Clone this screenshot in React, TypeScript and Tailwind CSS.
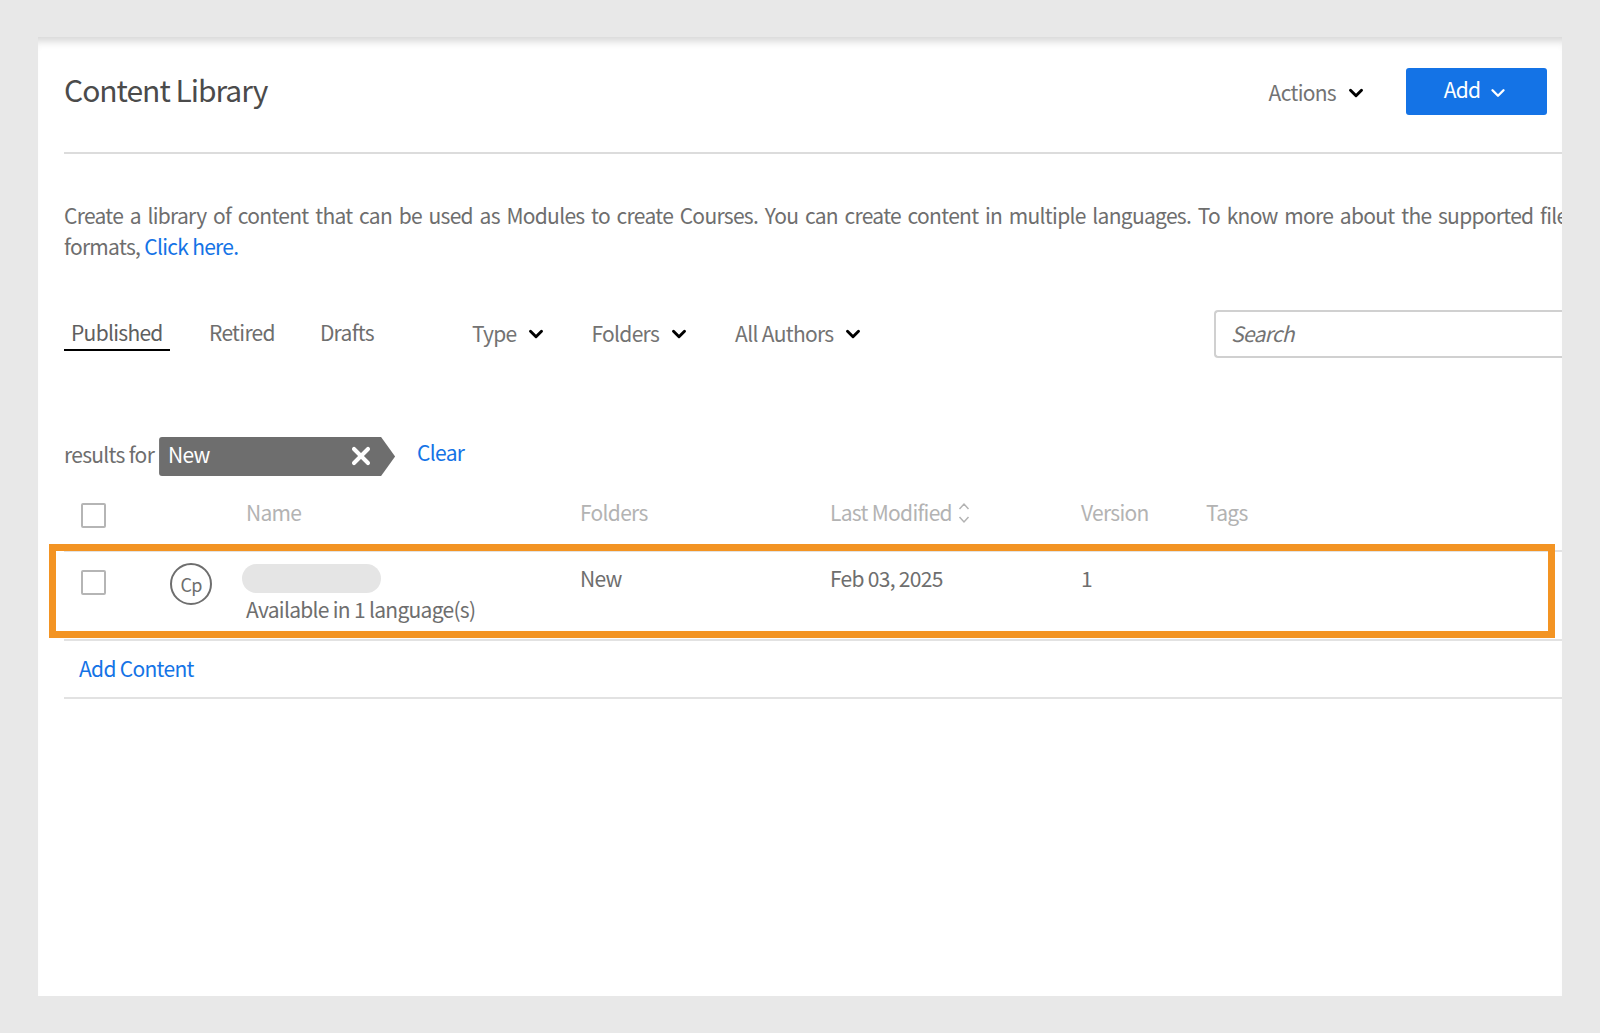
import React from 'react';
import { ChevronDown, X } from 'lucide-react';

const font = { fontFamily: '"Noto Sans CJK SC", "Open Sans", sans-serif' };

function Caret({ className = 'text-black' }: { className?: string }) {
  return <ChevronDown size={22} strokeWidth={3.2} className={className} />;
}

function Filter({ label, className }: { label: string; className: string }) {
  return (
    <button className={`flex items-center gap-[9px] text-[21px] tracking-[-0.7px] text-[#737373] ${className}`}>
      {label}
      <Caret />
    </button>
  );
}

function Checkbox() {
  return <span className="block w-[25px] h-[25px] rounded-[2px] border-2 border-[#b5b5b5] bg-white" />;
}

export default function App() {
  return (
    <div style={font} className="h-[1033px] bg-[#e8e8e8] pt-[37px] px-[38px] overflow-hidden">
      <div className="relative h-[959px] bg-white pl-[26px] overflow-hidden shadow-[inset_0_10px_8px_-6px_#d4d4d4]">
        {/* Header */}
        <div className="flex items-start justify-between h-[117px] border-b-2 border-[#dcdcdc] pr-[15px]">
          <h1 className="mt-[32px] text-[30px] leading-[40px] tracking-[-1px] text-[#4b4b4b]">Content Library</h1>
          <div className="flex items-center mt-[31px]">
            <button className="flex items-center gap-[9px] mt-[2px] text-[21px] tracking-[-0.7px] text-[#737373]">
              Actions
              <Caret />
            </button>
            <button className="flex items-center justify-center gap-[7px] ml-[39px] w-[141px] h-[47px] rounded-[3px] bg-[#1473e6] text-[21px] tracking-[-0.7px] text-white">
              <span className="-mt-[3px]">Add</span>
              <ChevronDown size={22} strokeWidth={2.6} className="mt-[3px]" />
            </button>
          </div>
        </div>

        {/* Intro */}
        <div className="mt-[46px] whitespace-nowrap text-[21px] leading-[31px] tracking-[-0.7px] text-[#6e6e6e]">
          <p className="[word-spacing:2.6px]">Create a library of content that can be used as Modules to create Courses. You can create content in multiple languages. To know more about the supported file</p>
          <p>formats, <a className="text-[#1473e6]">Click here.</a></p>
        </div>

        {/* Tabs and filters */}
        <div className="flex items-start mt-[48px] h-[47px] text-[21px] tracking-[-0.7px]">
          <div className="mt-[4px] w-[106px] h-[37px] border-b-2 border-black pl-[7px] leading-[36px] text-[#5f5f5f]">Published</div>
          <div className="mt-[4px] ml-[39px] leading-[36px] text-[#6e6e6e]">Retired</div>
          <div className="mt-[4px] ml-[45px] leading-[36px] text-[#6e6e6e]">Drafts</div>
          <div className="flex items-center mt-[6px] h-[36px]">
            <Filter label="Type" className="ml-[98px]" />
            <Filter label="Folders" className="ml-[44px]" />
            <Filter label="All Authors" className="ml-[45px]" />
          </div>
          <div className="ml-auto w-[348px] h-[48px] rounded-l-[4px] border-2 border-r-0 border-[#d0d0d0] pl-[15px] italic leading-[42px] text-[#737373]">Search</div>
        </div>

        {/* Active filter */}
        <div className="flex items-center mt-[80px] h-[39px] text-[21px] tracking-[-0.7px]">
          <span className="-mt-[4px] text-[#6e6e6e]">results for</span>
          <div className="flex items-center justify-between ml-[5px] w-[236px] h-[39px] pl-[9px] pr-[20px] pb-[4px] rounded-l-[3px] bg-[#6e6e6e] text-white [clip-path:polygon(0_0,222px_0,100%_50%,222px_100%,0_100%)]">
            New
            <X size={28} strokeWidth={3.5} className="mt-[2px]" />
          </div>
          <a className="ml-[22px] -mt-[7px] text-[#1473e6]">Clear</a>
        </div>

        {/* Table head */}
        <div className="grid grid-cols-[182px_334px_250px_251px_125px_1fr] items-center h-[74px] text-[21px] tracking-[-0.7px] text-[#b3b3b3]">
          <div className="pl-[17px] mt-[4px]"><Checkbox /></div>
          <div className="-mt-[1px]">Name</div>
          <div className="-mt-[1px]">Folders</div>
          <div className="flex items-center gap-[6px] -mt-[1px]">
            Last Modified
            <svg width="12" height="22" viewBox="0 0 12 22" fill="none" stroke="#b3b3b3" strokeWidth="1.5">
              <path d="M1.5 7 6 2l4.5 5M1.5 15 6 20l4.5-5" />
            </svg>
          </div>
          <div className="-mt-[1px]">Version</div>
          <div className="-mt-[1px]">Tags</div>
        </div>

        {/* Row */}
        <div className="relative grid grid-cols-[182px_334px_250px_251px_125px_1fr] h-[91px] border-y-2 border-[#e2e2e2] text-[21px] tracking-[-0.7px] text-[#6e6e6e]">
          <div className="relative pl-[17px] pt-[18px]">
            <Checkbox />
            <span className="absolute left-[106px] top-[11px] flex items-center justify-center w-[42px] h-[42px] rounded-full border-2 border-[#6e6e6e] text-[18px]">Cp</span>
          </div>
          <div>
            <div className="-ml-[4px] mt-[12px] w-[139px] h-[29px] rounded-full bg-[#e5e5e5]" />
            <div className="leading-[32px]">Available in 1 language(s)</div>
          </div>
          <div className="mt-[10px] leading-[32px]">New</div>
          <div className="mt-[10px] leading-[32px]">Feb 03, 2025</div>
          <div className="mt-[10px] leading-[32px]">1</div>
          <div />
          <div className="absolute -left-[15px] right-[7px] -top-[8px] bottom-[1px] border-[7px] border-[#f39423]" />
        </div>

        {/* Add content */}
        <div className="h-[58px] border-b-2 border-[#e2e2e2] pl-[15px] text-[21px] leading-[54px] tracking-[-0.7px] text-[#1473e6]">
          Add Content
        </div>
      </div>
    </div>
  );
}
